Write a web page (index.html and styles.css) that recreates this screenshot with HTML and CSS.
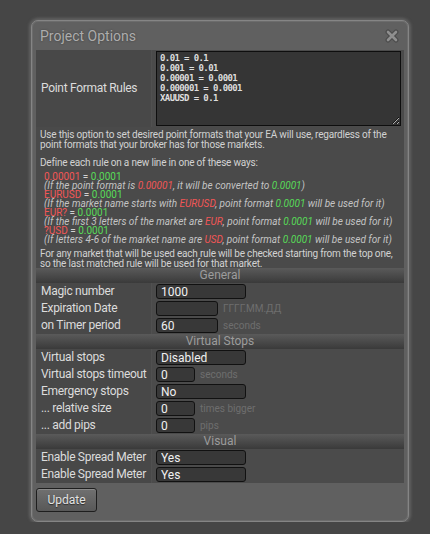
FILE: index.html
```html
<!DOCTYPE html>
<html lang="en">
<head>
    <meta charset="UTF-8">
    <title>Project Options</title>
    <link rel="stylesheet" href="styles.css">
</head>
<body>
    <div class="dialog">
        <div class="dialog-title">
            <span>Project Options</span>
            <svg class="close-btn" width="14" height="14" viewBox="0 0 14 14">
                <path d="M3 3 L11 11 M11 3 L3 11" stroke="#4c4c4c" stroke-width="5" stroke-linecap="round"/>
                <path d="M3 3 L11 11 M11 3 L3 11" stroke="#8f8f8f" stroke-width="2.6" stroke-linecap="round"/>
            </svg>
        </div>

        <div class="panel">
            <div class="row row-rules">
                <div class="label">Point Format Rules</div>
                <div class="value">
                    <textarea class="rules" spellcheck="false">0.01 = 0.1
0.001 = 0.01
0.00001 = 0.0001
0.000001 = 0.0001
XAUUSD = 0.1</textarea>
                </div>
            </div>

            <div class="help">
                <p>Use this option to set desired point formats that your EA will use, regardless of the point formats that your broker has for those markets.</p>
                <p class="define">Define each rule on a new line in one of these ways:</p>
                <ul class="examples">
                    <li><span class="red">0.00001</span> = <span class="green">0.0001</span></li>
                    <li class="note">(If the point format is <span class="red">0.00001</span>, it will be converted to <span class="green">0.0001</span>)</li>
                    <li><span class="red">EURUSD</span> = <span class="green">0.0001</span></li>
                    <li class="note">(If the market name starts with <span class="red">EURUSD</span>, point format <span class="green">0.0001</span> will be used for it)</li>
                    <li><span class="red">EUR?</span> = <span class="green">0.0001</span></li>
                    <li class="note">(If the first 3 letters of the market are <span class="red">EUR</span>, point format <span class="green">0.0001</span> will be used for it)</li>
                    <li><span class="red">?USD</span> = <span class="green">0.0001</span></li>
                    <li class="note">(If letters 4-6 of the market name are <span class="red">USD</span>, point format <span class="green">0.0001</span> will be used for it)</li>
                </ul>
                <p>For any market that will be used each rule will be checked starting from the top one, so the last matched rule will be used for that market.</p>
            </div>

            <div class="section">General</div>
            <div class="row">
                <div class="label">Magic number</div>
                <div class="value"><input class="field wide" value="1000"></div>
            </div>
            <div class="row">
                <div class="label">Expiration Date</div>
                <div class="value"><input class="field mid" value=""><span class="hint">ГГГГ.ММ.ДД</span></div>
            </div>
            <div class="row">
                <div class="label">on Timer period</div>
                <div class="value"><input class="field mid" value="60"><span class="hint">seconds</span></div>
            </div>

            <div class="section">Virtual Stops</div>
            <div class="row">
                <div class="label">Virtual stops</div>
                <div class="value"><input class="field wide" value="Disabled"></div>
            </div>
            <div class="row">
                <div class="label">Virtual stops timeout</div>
                <div class="value"><input class="field small" value="0"><span class="hint">seconds</span></div>
            </div>
            <div class="row">
                <div class="label">Emergency stops</div>
                <div class="value"><input class="field wide" value="No"></div>
            </div>
            <div class="row">
                <div class="label">... relative size</div>
                <div class="value"><input class="field small" value="0"><span class="hint">times bigger</span></div>
            </div>
            <div class="row">
                <div class="label">... add pips</div>
                <div class="value"><input class="field small" value="0"><span class="hint">pips</span></div>
            </div>

            <div class="section">Visual</div>
            <div class="row">
                <div class="label">Enable Spread Meter</div>
                <div class="value"><input class="field wide" value="Yes"></div>
            </div>
            <div class="row">
                <div class="label">Enable Spread Meter</div>
                <div class="value"><input class="field wide" value="Yes"></div>
            </div>
        </div>

        <button class="update-btn">Update</button>
    </div>
</body>
</html>
```

FILE: styles.css
```css
body {
    margin: 0;
    padding: 20px 0 0 31px;
    background: #464646;
    font-family: Roboto, "Liberation Sans", sans-serif;
}

.dialog {
    width: 376px;
    background: #606060;
    border: 1px solid #858585;
    border-radius: 7px;
    box-shadow: 0 0 3px 2px rgba(130,130,130,0.45), inset 0 0 0 1px #6c6c6c;
    padding-bottom: 9px;
}

.dialog-title {
    height: 29px;
    display: flex;
    align-items: center;
    justify-content: space-between;
    padding: 0 9px 0 8px;
    font-size: 14px;
    color: #adadad;
    text-shadow: 0 0 2px #3c3c3c;
}

.close-btn {
    margin-top: 1px;
}

.panel {
    margin: 0 4px;
    background: #4a4a4a;
}

.row {
    display: grid;
    grid-template-columns: 115px 1fr;
    height: 17px;
}

.label {
    padding-left: 5px;
    font-size: 12px;
    letter-spacing: -0.3px;
    line-height: 17px;
    color: #dcdcdc;
    background: #484848;
    white-space: nowrap;
}

.value {
    display: flex;
    align-items: center;
    padding-left: 4px;
    border-left: 1px solid #505050;
    background: #4b4b4b;
}

.row-rules {
    height: 77px;
}

.row-rules .label {
    display: flex;
    align-items: center;
}

.rules {
    width: 245px;
    height: 75px;
    box-sizing: border-box;
    margin: 0;
    padding: 1px 3px;
    background: #353535;
    border: 1px solid #0e0e0e;
    color: #dedede;
    font-family: "DejaVu Sans Mono", monospace;
    font-weight: bold;
    font-size: 9px;
    letter-spacing: -0.6px;
    line-height: 10px;
    outline: none;
}

.help {
    height: 141px;
    box-sizing: border-box;
    padding: 3px 4px 0 4px;
    font-size: 10px;
    letter-spacing: -0.2px;
    line-height: 10px;
    color: #d2d2d2;
}

.help p {
    margin: 0;
}

.help .define {
    margin-top: 8px;
}

.examples {
    list-style: none;
    margin: 4px 0 5px 0;
    padding-left: 4px;
    letter-spacing: 0;
    line-height: 9px;
}

.examples .note {
    font-style: italic;
    color: #c4c4c4;
}

.red {
    color: #f25656;
}

.green {
    color: #58dc58;
}

.section {
    height: 15px;
    line-height: 15px;
    text-align: center;
    font-size: 12px;
    color: #9c9c9c;
    background: linear-gradient(#5a5a5a, #3a3a3a);
}

.field {
    height: 15px;
    box-sizing: border-box;
    margin: 0;
    padding: 0 4px;
    background: #383838;
    border: 1px solid #111;
    border-radius: 3px;
    color: #f0f0f0;
    font-family: Roboto, "Liberation Sans", sans-serif;
    font-size: 12px;
    outline: none;
}

.wide {
    width: 90px;
}

.mid {
    width: 62px;
}

.small {
    width: 39px;
}

.hint {
    margin-left: 5px;
    font-size: 10px;
    color: #6e6e6e;
}

.update-btn {
    display: block;
    margin: 5px 0 0 4px;
    width: 61px;
    height: 24px;
    padding: 0;
    background: linear-gradient(#707070, #585858);
    border: 1px solid #1e1e1e;
    border-radius: 3px;
    color: #e4e4e4;
    font-family: Roboto, "Liberation Sans", sans-serif;
    font-size: 12px;
    text-shadow: 0 1px 1px #2a2a2a;
    box-shadow: inset 0 1px 0 #8a8a8a;
}
```
